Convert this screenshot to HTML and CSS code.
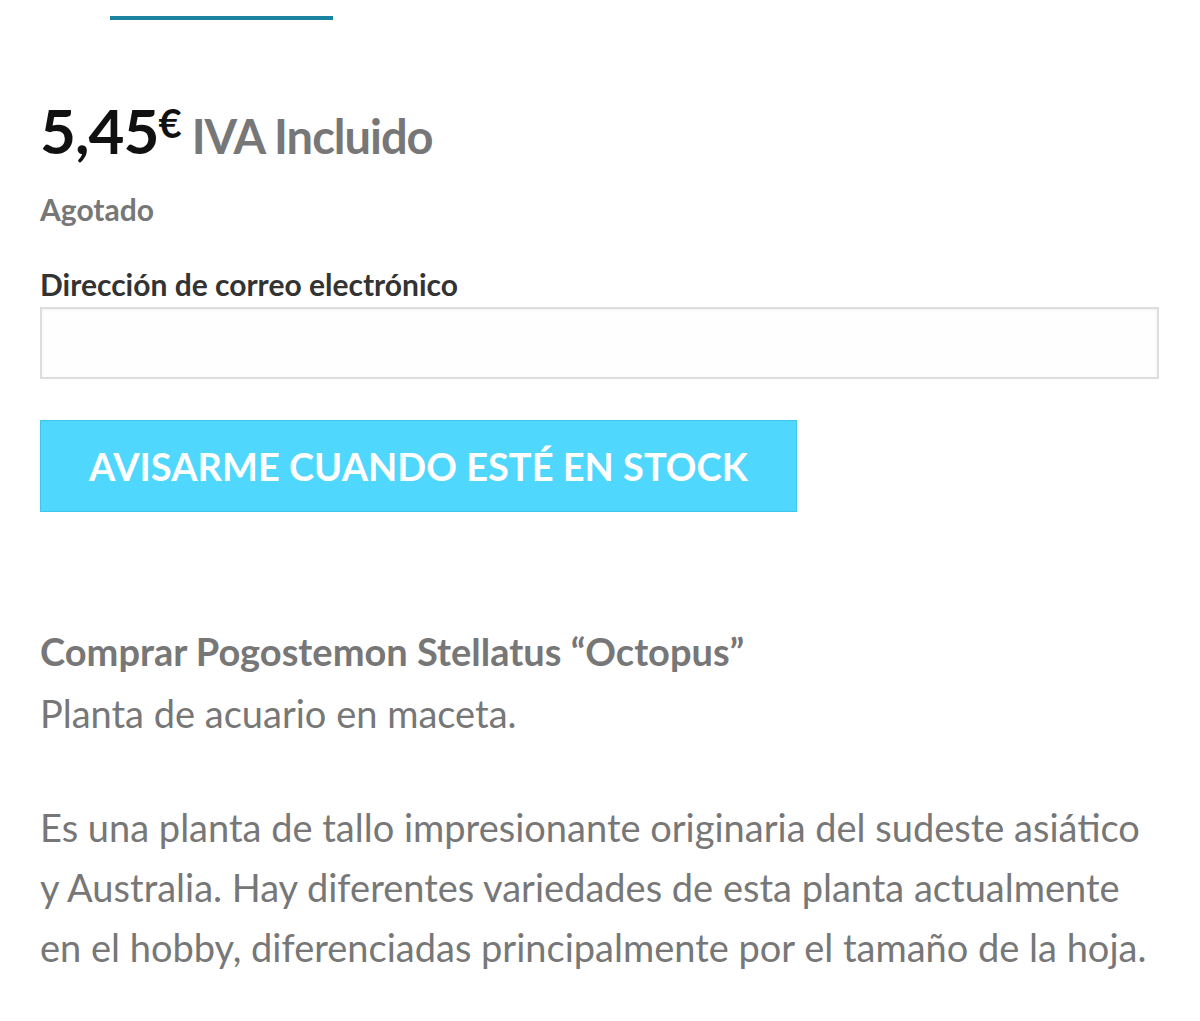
FILE: index.html
```html
<!DOCTYPE html>
<html lang="es">
<head>
    <meta charset="UTF-8">
    <meta name="viewport" content="width=device-width, initial-scale=1.0">
    <title>Pogostemon Stellatus "Octopus"</title>
    <link rel="stylesheet" href="styles.css">
</head>
<body>
    <div class="product-summary">
        <div class="tab-line"></div>

        <p class="price">
            <span class="amount">5,45<span class="currency">€</span></span>
            <span class="tax-label">IVA Incluido</span>
        </p>

        <p class="stock">Agotado</p>

        <form class="stock-notify" onsubmit="return false;">
            <label for="notifyEmail" class="field-label">Dirección de correo electrónico</label>
            <input type="email" id="notifyEmail" class="field-input">
            <button type="submit" class="notify-btn">Avisarme cuando esté en stock</button>
        </form>

        <div class="description">
            <h2 class="desc-title">Comprar Pogostemon Stellatus “Octopus”</h2>
            <p class="desc-sub">Planta de acuario en maceta.</p>
            <p class="desc-text">Es una planta de tallo impresionante originaria del sudeste asiático y Australia. Hay diferentes variedades de esta planta actualmente en el hobby, diferenciadas principalmente por el tamaño de la hoja.</p>
        </div>
    </div>
</body>
</html>
```

FILE: styles.css
```css
* {
    margin: 0;
    padding: 0;
    box-sizing: border-box;
}

body {
    background: #fff;
    font-family: Lato, "Open Sans", sans-serif;
    color: #777;
}

.product-summary {
    padding: 16px 41px 0 40px;
}

.tab-line {
    width: 223px;
    height: 4px;
    margin-left: 70px;
    background: #1a84a0;
}

.price {
    margin-top: 75px;
    font-size: 62px;
    line-height: 70px;
    font-weight: 700;
    letter-spacing: -1px;
}

.amount {
    color: #111;
}

.currency {
    font-size: 40px;
    vertical-align: 16px;
    line-height: 40px;
}

.tax-label {
    margin-left: -3px;
    font-size: 47px;
    color: #777;
}

.stock {
    margin-top: 20px;
    font-size: 30px;
    font-weight: 700;
    color: #777;
}

.stock-notify {
    margin-top: 39px;
}

.field-label {
    display: block;
    font-size: 30px;
    font-weight: 700;
    color: #333;
    line-height: 36px;
}

.field-input {
    display: block;
    width: 100%;
    height: 72px;
    margin-top: 5px;
    border: 2px solid #ddd;
    background: #fefefe;
    box-shadow: inset 0 1px 3px rgba(0, 0, 0, 0.06);
    font-family: inherit;
    font-size: 30px;
    outline: none;
}

.notify-btn {
    display: block;
    margin-top: 41px;
    height: 92px;
    padding: 0 48px;
    background: #50d7fd;
    border: 1px solid #3fc6ec;
    color: #fff;
    font-family: inherit;
    font-size: 38px;
    font-weight: 700;
    text-transform: uppercase;
    cursor: pointer;
}

.description {
    margin-top: 113px;
}

.desc-title {
    font-size: 38px;
    font-weight: 700;
    color: #777;
    line-height: 52px;
}

.desc-sub {
    margin-top: 6px;
    font-size: 38px;
    line-height: 60px;
}

.desc-text {
    margin-top: 54px;
    font-size: 38px;
    line-height: 60px;
}
```
